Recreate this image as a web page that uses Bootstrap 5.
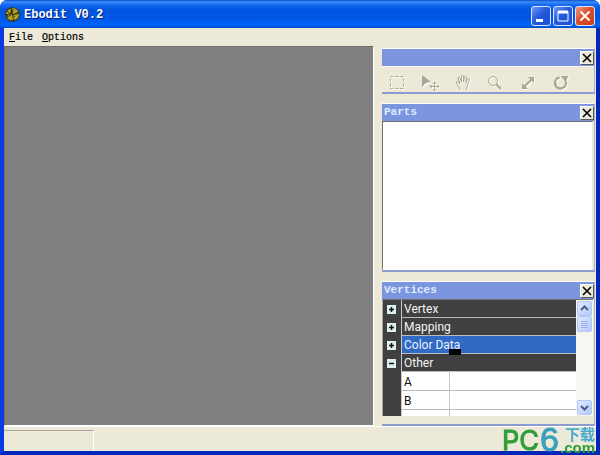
<!DOCTYPE html>
<html lang="en">
<head>
<meta charset="utf-8">
<meta name="viewport" content="width=device-width, initial-scale=1">
<title>Ebodit V0.2</title>
<link href="https://cdn.jsdelivr.net/npm/bootstrap@5.3.0/dist/css/bootstrap.min.css" rel="stylesheet">
<style>
body { background: #fff; font-family: "Liberation Mono", monospace; }
button { padding: 0; border: 0; background: none; color: inherit; font: inherit; }
svg { display: block; }
.app-window { background: #ece9d8; border: 4px solid #0a3be0; border-top: 0; border-right-color: #0527b8; border-bottom-color: #0527b8; border-radius: 8px 8px 0 0; }
.title-bar { height: 28px; margin: 0 -4px; padding: 2px 5px 0 5px; border-radius: 7px 7px 0 0; color: #fff;
  background: linear-gradient(#0a4fd0 0, #3c8cf8 2px, #1468f0 5px, #0055e0 10px, #0058e8 19px, #0064fa 25px, #0048d0 28px); }
.title-bar h1 { padding-top: 3px; font-size: 12px; line-height: 20px; font-weight: 700; text-shadow: 1px 1px #0a1f80; }
.caption-group { gap: 2px; }
.caption-btn { width: 20px; height: 20px; border: 1px solid #dbe6fd; border-radius: 3px; background: linear-gradient(135deg, #6c9bf8, #2459dc 45%, #1c4fd6); }
.caption-btn.quit { background: linear-gradient(135deg, #ee9a80, #dc4f2c 45%, #c83c18); }
.menu-bar { height: 18px; padding-left: 5px; gap: 9px; font-size: 10px; color: #000; }
.menu-bar button { line-height: 18px; padding-top: 1px; -webkit-text-stroke: .2px #000; }
.drawing-area { background: #808080; border: 1px solid #716f64; border-right: 1px solid #fff; border-bottom-color: #fff; }
.dock { width: 213px; margin: 2px 1px 0 8px; gap: 9px; }
.panel { border-right: 1px solid #a4b0dc; border-bottom: 2px solid #8c9cce; border-top: 1px solid #fff; }
.panel-head { height: 17px; padding-left: 2px; background: #7b96df; color: #fff; }
.panel-head h2 { font-size: 11px; line-height: 17px; font-weight: 700; color: #dfecff; }
.panel-close { width: 14px; height: 14px; background: #ece9d8; border: 1px solid #fff; border-right-color: #55585c; border-bottom-color: #55585c; }
.tools { height: 26px; padding: 6px 24px 0 6px; border-top: 1px solid #f8f6ee; color: #aaa799; }
.tools svg { filter: drop-shadow(1px 1px 0 #fff); }
.parts-list { background: #fff; border: 1px solid #716f64; border-right-color: #ece9d8; border-bottom-color: #fff; margin-right: 1px; }
.tree-frame { height: 117px; border-top: 1px solid #716f64; border-left: 1px solid #aca899; margin: 0 1px 8px 0; background: #fff; }
.prop-table { width: 100%; table-layout: fixed; border-collapse: separate; border-spacing: 0; font: 12px/15px Roboto, sans-serif; color: #111; }
.prop-table .prop-name { width: 48px; }
.prop-table th, .prop-table td { height: 19px; padding: 2px 0 0 2px; font-weight: 400; border-bottom: 1px solid #bcbcbc; border-left: 1px solid #c8c8c8; white-space: nowrap; }
.prop-table .group th { height: 18px; background: #404040; color: #f4f4f4; }
.prop-table .gutter { width: 18px; padding: 0 0 0 4px; background: #404040; border: 0; }
.prop-table .group .gutter { height: 18px; }
.prop-table .group.active th { background: #316ac5; color: #e8f1ff; }
.scroll-track { width: 17px; background: #f7f6f0; padding: 1px; }
.scroll-btn { width: 15px; height: 15px; border: 1px solid #b2c6f6; border-radius: 2px; background: linear-gradient(135deg, #dfe8ff, #b5c9fa); }
.scroll-btn.thumb { height: 16px; }
.edit-cursor { left: 66px; top: 49px; width: 12px; height: 6px; background: #000; }
.status-bar { height: 25px; padding-top: 3px; border-top: 1px solid #fff; }
.status-cell { width: 90px; border-top: 1px solid #aca899; border-right: 1px solid #fff; }
.site-tag { right: 1px; bottom: 0; width: 97px; height: 32px; color: #2f9e36; }
.site-tag span { position: absolute; }
.tag-pc { left: 0; top: 5px; font: 27px/26px Inter, sans-serif; -webkit-text-stroke: 1px; }
.tag-six { left: 38px; top: 0; font: 34px/32px "Liberation Sans", sans-serif; color: #3ba0bd; -webkit-text-stroke: 1px; }
.tag-cn { left: 63px; top: 3px; font: 700 15px/15px "Noto Sans CJK SC", sans-serif; color: #4aa9ce; }
.tag-com { left: 58px; top: 19px; font: 700 15px/12px "Liberation Sans", sans-serif; }
</style>
<script src="https://cdn.jsdelivr.net/npm/bootstrap@5.3.0/dist/js/bootstrap.bundle.min.js"></script>
</head>
<body class="overflow-hidden">
<svg class="d-none" aria-hidden="true">
  <symbol id="cross" viewBox="0 0 12 12"><path d="M2 2l8 8M10 2l-8 8" stroke="#000" stroke-width="1.6"/></symbol>
  <symbol id="plus" viewBox="0 0 9 9"><path d="M0 0h9v9H0z" fill="#dcefee"/><path d="M2 4.500h5M4.500 2v5" stroke="#111" stroke-width="1.500"/></symbol>
  <symbol id="minus" viewBox="0 0 9 9"><path d="M0 0h9v9H0z" fill="#dcefee"/><path d="M2 4.500h5" stroke="#111" stroke-width="1.500"/></symbol>
</svg>
<div class="app-window vh-100 d-flex flex-column position-relative">
  <header class="title-bar d-flex align-items-start flex-shrink-0">
    <svg class="me-1 mt-1" width="15" height="17" viewBox="0 -1 15 17"><circle cx="7.500" cy="7.500" r="7.300" fill="#3a370c"/><path d="M1 7q1-5 5-5l-1 5zm6-6q5 0 6 4l-5 2zm1 7l6-1q0 5-5 6zM3 8l4-1 1 6q-4 1-6-3z" fill="#b0a32c"/><path d="M2 4l4 4-4 2M8 2L7 8l3 2" stroke="#4c400c" fill="none"/></svg>
    <h1 class="mb-0 flex-grow-1">Ebodit V0.2</h1>
    <div class="caption-group d-flex mt-1">
      <button class="caption-btn" aria-label="Minimize"><svg width="18" height="18"><path d="M4 12h7v3H4z" fill="#fff"/></svg></button>
      <button class="caption-btn" aria-label="Maximize"><svg width="18" height="18"><path d="M4 4.500h10v9.500H4z" fill="none" stroke="#fff"/><path d="M4 5h10" stroke="#fff" stroke-width="3"/></svg></button>
      <button class="caption-btn quit" aria-label="Close"><svg width="18" height="18"><path d="M4.500 4.500l9 9m0-9l-9 9" stroke="#fff" stroke-width="2"/></svg></button>
    </div>
  </header>
  <nav class="menu-bar d-flex flex-shrink-0">
    <button><u>F</u>ile</button>
    <button><u>O</u>ptions</button>
  </nav>
  <main class="d-flex flex-grow-1 overflow-hidden">
    <div class="drawing-area flex-grow-1"></div>
    <aside class="dock d-flex flex-column flex-shrink-0">
      <section class="panel">
        <div class="panel-head d-flex align-items-center justify-content-end"><button class="panel-close" aria-label="Close tools"><svg width="12" height="12"><use href="#cross"/></svg></button></div>
        <div class="tools d-flex align-items-center justify-content-between">
          <button aria-label="Select"><svg width="18" height="18"><path d="M2.500 2.500h13v12h-13z" fill="none" stroke="currentColor" stroke-dasharray="3 2"/></svg></button>
          <button aria-label="Move"><svg width="18" height="18"><path d="M1 1v12l4-4 5-1z" fill="currentColor"/><path d="M13.500 8v9M9 12.500h9M12 9.500l1.500-1.500L15 9.500M12 15.500l1.500 1.500 1.500-1.500M10.500 11L9 12.500l1.500 1.500M16.500 11l1.500 1.500-1.500 1.500" fill="none" stroke="currentColor"/></svg></button>
          <button aria-label="Pan"><svg width="18" height="18"><path d="M6 16l-1-3-3-4q0-2 2-1l2 2-2-6q1-2 2 0l1.500 4V2q1-1 2 0v6l1-5q1-1 2 0l-1 6 2-4q1-1 2 0l-2 6-1.500 5" fill="none" stroke="currentColor"/></svg></button>
          <button aria-label="Zoom"><svg width="18" height="18"><circle cx="7" cy="7" r="4.500" fill="none" stroke="currentColor"/><path d="M10 10l5 5" stroke="currentColor" stroke-width="2"/></svg></button>
          <button aria-label="Scale"><svg width="18" height="18"><path d="M5 13l8-8" stroke="currentColor" stroke-width="2"/><path d="M9 3h6v6zM3 9v6h6z" fill="currentColor"/></svg></button>
          <button aria-label="Rotate"><svg width="18" height="18"><path d="M7.500 3.500A5.500 5.500 0 1 0 14 8" fill="none" stroke="currentColor" stroke-width="2.500"/><path d="M9 2h7l-2 7z" fill="currentColor"/></svg></button>
        </div>
      </section>
      <section class="panel flex-grow-1 d-flex flex-column">
        <div class="panel-head d-flex align-items-center justify-content-between"><h2 class="m-0">Parts</h2><button class="panel-close" aria-label="Close parts"><svg width="12" height="12"><use href="#cross"/></svg></button></div>
        <div class="parts-list flex-grow-1"></div>
      </section>
      <section class="panel">
        <div class="panel-head d-flex align-items-center justify-content-between"><h2 class="m-0">Vertices</h2><button class="panel-close" aria-label="Close vertices"><svg width="12" height="12"><use href="#cross"/></svg></button></div>
        <div class="tree-frame d-flex overflow-hidden">
          <div class="flex-grow-1 position-relative">
            <table class="prop-table">
              <colgroup><col class="gutter"><col class="prop-name"><col></colgroup>
              <tbody>
              <tr class="group"><td class="gutter"><button class="d-block" aria-label="Expand Vertex"><svg width="9" height="9"><use href="#plus"/></svg></button></td><th colspan="2">Vertex</th></tr>
              <tr class="group"><td class="gutter"><button class="d-block" aria-label="Expand Mapping"><svg width="9" height="9"><use href="#plus"/></svg></button></td><th colspan="2">Mapping</th></tr>
              <tr class="group active"><td class="gutter"><button class="d-block" aria-label="Expand Color Data"><svg width="9" height="9"><use href="#plus"/></svg></button></td><th colspan="2">Color Data</th></tr>
              <tr class="group"><td class="gutter"><button class="d-block" aria-label="Collapse Other"><svg width="9" height="9"><use href="#minus"/></svg></button></td><th colspan="2">Other</th></tr>
              <tr><td class="gutter"></td><td>A</td><td></td></tr>
              <tr><td class="gutter"></td><td>B</td><td></td></tr>
              <tr><td class="gutter"></td><td></td><td></td></tr>
              </tbody>
            </table>
            <div class="edit-cursor position-absolute"></div>
          </div>
          <div class="scroll-track d-flex flex-column">
            <button class="scroll-btn" aria-label="Scroll up"><svg width="13" height="13"><path d="M3 8l3.500-3.500L10 8" fill="none" stroke="#43608c" stroke-width="2"/></svg></button>
            <button class="scroll-btn thumb" aria-label="Scroll position"><svg width="13" height="14"><path d="M3 4.500h7M3 6.500h7M3 8.500h7M3 10.500h7" stroke="#9db5ef"/></svg></button>
            <button class="scroll-btn mt-auto" aria-label="Scroll down"><svg width="13" height="13"><path d="M3 5l3.500 3.500L10 5" fill="none" stroke="#43608c" stroke-width="2"/></svg></button>
          </div>
        </div>
      </section>
    </aside>
  </main>
  <footer class="status-bar d-flex flex-shrink-0"><div class="status-cell"></div></footer>
</div>
<div class="site-tag position-fixed"><span class="tag-pc">PC</span><span class="tag-six">6</span><span class="tag-cn">下载</span><span class="tag-com">.com</span></div>
</body>
</html>
